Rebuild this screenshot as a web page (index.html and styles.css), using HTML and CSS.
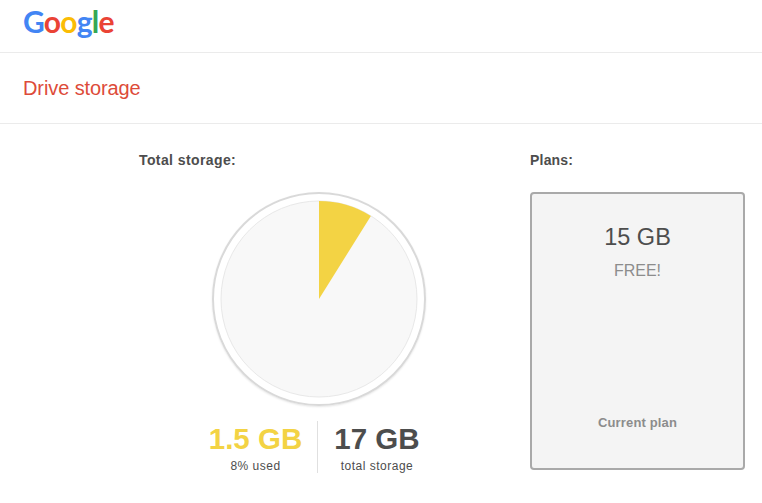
FILE: index.html
```html
<!DOCTYPE html>
<html lang="en">

<head>
    <meta charset="UTF-8">
    <title>Drive storage</title>
    <link rel="stylesheet" href="styles.css">
</head>

<body>

    <header class="top-bar">
        <div class="logo"><span class="blue">G</span><span class="red">o</span><span class="yellow">o</span><span class="blue">g</span><span class="green">l</span><span class="red">e</span></div>
    </header>

    <div class="title-bar">
        <h1>Drive storage</h1>
    </div>

    <main class="content">

        <section class="storage">
            <h2>Total storage:</h2>
            <div class="pie-ring">
                <svg class="pie" width="198" height="198" viewBox="0 0 198 198">
                    <circle cx="99" cy="99" r="98" fill="#f8f8f8" stroke="#e8e8e8" stroke-width="1"/>
                    <path d="M99 99 L99 1 A98 98 0 0 1 150.9 15.9 Z" fill="#f3d344"/>
                </svg>
            </div>
            <div class="stats">
                <div class="stat">
                    <div class="amount used">1.5 GB</div>
                    <div class="label">8% used</div>
                </div>
                <div class="stat">
                    <div class="amount">17 GB</div>
                    <div class="label">total storage</div>
                </div>
            </div>
        </section>

        <section class="plans">
            <h2 class="plans-title">Plans:</h2>
            <div class="plan-card">
                <div class="plan-size">15 GB</div>
                <div class="plan-price">FREE!</div>
                <div class="plan-status">Current plan</div>
            </div>
        </section>

    </main>

</body>

</html>
```

FILE: styles.css
```css
* {
    margin: 0;
    box-sizing: border-box;
}

body {
    font-family: "Liberation Sans", Arial, sans-serif;
    background-color: white;
    color: #4d4d4d;
    overflow: hidden;
}

.top-bar {
    height: 53px;
    padding: 1px 0 0 23px;
    border-bottom: 1px solid #ebebeb;
}

.logo {
    font-family: Lato, sans-serif;
    font-size: 30px;
    font-weight: bold;
    line-height: 40px;
    letter-spacing: -0.75px;
}

.blue {
    color: #4285f4;
}

.red {
    color: #ea4335;
}

.yellow {
    color: #fbbc05;
}

.green {
    color: #34a853;
}

.title-bar {
    height: 71px;
    padding: 23px 0 0 23px;
    border-bottom: 1px solid #ebebeb;
}

.title-bar h1 {
    font-size: 20px;
    line-height: 24px;
    font-weight: normal;
    letter-spacing: -0.1px;
    color: #dd4b39;
}

.content {
    display: flex;
    padding: 27px 0 0 139px;
}

.storage {
    width: 360px;
    margin-right: 31px;
}

h2 {
    font-size: 14px;
    line-height: 18px;
    font-weight: bold;
    letter-spacing: 0.4px;
}

.plans-title {
    letter-spacing: 0.2px;
}

.pie-ring {
    display: flex;
    align-items: center;
    justify-content: center;
    width: 214px;
    height: 214px;
    margin: 23px auto 0;
    border: 2px solid #d9d9d9;
    border-radius: 50%;
    box-shadow: 0 1px 2px rgba(0, 0, 0, 0.1);
}

.pie {
    display: block;
}

.stats {
    display: flex;
    justify-content: center;
    margin-top: 15px;
}

.stat {
    width: 122px;
    height: 52px;
    padding-right: 3px;
    text-align: center;
}

.stat:first-child {
    width: 119px;
    border-right: 1px solid #e0e0e0;
    padding-right: 4px;
}

.amount {
    font-size: 29.5px;
    line-height: 36px;
    font-weight: bold;
}

.used {
    color: #f3d344;
}

.label {
    margin-top: 1px;
    font-size: 12px;
    line-height: 16px;
    letter-spacing: 0.5px;
}

.plan-card {
    display: flex;
    flex-direction: column;
    align-items: center;
    width: 215px;
    height: 278px;
    margin-top: 23px;
    padding-top: 29px;
    background-color: #f4f4f4;
    border: 2px solid #a9a9a9;
    border-radius: 4px;
}

.plan-size {
    font-size: 23.5px;
    line-height: 28px;
}

.plan-price {
    margin-top: 10px;
    font-size: 16px;
    line-height: 20px;
    color: #8c8c8c;
}

.plan-status {
    margin-top: auto;
    margin-bottom: 37px;
    font-size: 13px;
    line-height: 16px;
    font-weight: bold;
    letter-spacing: 0.15px;
    color: #8c8c8c;
}
```
